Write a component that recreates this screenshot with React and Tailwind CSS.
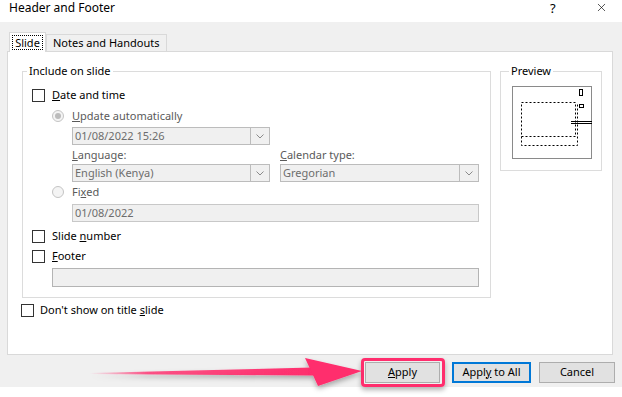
import { X } from 'lucide-react'

function Chevron() {
  return (
    <svg width="8" height="5" viewBox="0 0 8 5" className="text-[#8a8a8a]">
      <path d="M0.5 0.5 L4 4 L7.5 0.5" fill="none" stroke="currentColor" strokeWidth="1" />
    </svg>
  )
}

function Combo({ value, className }) {
  return (
    <div className={`flex h-[18px] border border-[#bcbcbc] bg-[#f0f0f0] ${className}`}>
      <span className="flex-1 pl-[2px] leading-[16px] text-[#6d6d6d]">{value}</span>
      <span className="w-[19px] flex items-center justify-center border-l border-[#bcbcbc]">
        <Chevron />
      </span>
    </div>
  )
}

function Checkbox() {
  return <span className="w-[13px] h-[13px] border border-[#333] bg-white shrink-0" />
}

function Radio({ checked }) {
  return (
    <span className="w-[12px] h-[12px] rounded-full border border-[#c4c4c4] bg-[#f4f4f4] shrink-0 flex items-center justify-center">
      {checked && <span className="w-[6px] h-[6px] rounded-full bg-[#bcbcbc]" />}
    </span>
  )
}

function PreviewBox() {
  return (
    <svg width="80" height="73" viewBox="0 0 80 73" className="block">
      <rect x="0.5" y="0.5" width="79" height="72" fill="white" stroke="#8a8a8a" />
      <rect x="67.5" y="3.5" width="3" height="6" fill="none" stroke="#000" />
      <rect x="67.5" y="18.5" width="4" height="3" fill="none" stroke="#000" />
      <path d="M9.5 16.5 H63.5 V50.5 H9.5 Z" fill="none" stroke="#000" strokeDasharray="2 2" />
      <path d="M9.5 50.5 V59.5 H65.5 V16.5" fill="none" stroke="#000" strokeDasharray="2 2" />
      <path d="M59 35.5 H80 M59 37.5 H80" stroke="#000" />
    </svg>
  )
}

export default function App() {
  return (
    <div className="relative w-[622px] h-[397px] bg-white overflow-hidden text-[11px] text-black" style={{ fontFamily: '"Noto Sans", sans-serif' }}>
      {/* Title bar */}
      <div className="h-[22px] flex items-center pl-[9px] relative">
        <span className="text-[12px] leading-none -mt-[6px]">Header and Footer</span>
        <span className="absolute left-[550px] top-[-1px] text-[13px]">?</span>
        <X className="absolute left-[595px] top-[1px]" size={13} strokeWidth={1.2} />
      </div>

      {/* Body */}
      <div className="bg-[#f0f0f0] h-[365px] pt-[10px]">
        {/* Tabs */}
        <div className="flex items-end pl-[9px] h-[19px]">
          <div className="relative z-10 -mb-px h-[20px] w-[37px] bg-white border border-b-0 border-[#d9d9d9] flex items-center justify-center">
            <span className="border border-dotted border-black px-[2px] leading-[13px]">Slide</span>
          </div>
          <div className="h-[17px] bg-[#f0f0f0] border border-b-0 border-[#d9d9d9] px-[6px] leading-[15px]">Notes and Handouts</div>
        </div>

        {/* Panel */}
        <div className="ml-[7px] w-[606px] h-[304px] bg-white border border-[#d9d9d9] pl-[14px] pr-[10px] pt-[11px]">
          <div className="flex gap-[9px]">
            <div className="w-[469px]">
              <fieldset className="border border-[#dcdcdc] pl-[9px] pb-[10px]">
                <legend className="-ml-[5px] px-[2px] leading-[16px]">Include on slide</legend>
                <div className="flex items-center gap-[7px] h-[16px] mt-[8px]">
                  <Checkbox />
                  <span><u>D</u>ate and time</span>
                </div>
                <div className="pl-[20px]">
                  <div className="flex items-center gap-[8px] h-[16px] mt-[5px] text-[#5a5a5a]">
                    <Radio checked />
                    <span><u>U</u>pdate automatically</span>
                  </div>
                  <div className="pl-[20px]">
                    <Combo value="01/08/2022 15:26" className="w-[198px] mt-[3px]" />
                    <div className="flex gap-[10px] mt-[2px] text-[#5a5a5a]">
                      <div className="w-[198px]">
                        <div className="h-[15px] leading-[15px]"><u>L</u>anguage:</div>
                        <Combo value="English (Kenya)" className="w-[198px] mt-[2px]" />
                      </div>
                      <div className="w-[199px]">
                        <div className="h-[15px] leading-[15px]"><u>C</u>alendar type:</div>
                        <Combo value="Gregorian" className="w-[199px] mt-[2px]" />
                      </div>
                    </div>
                  </div>
                  <div className="flex items-center gap-[8px] h-[16px] mt-[2px] text-[#5a5a5a]">
                    <Radio />
                    <span>Fi<u>x</u>ed</span>
                  </div>
                  <div className="ml-[20px] w-[407px] h-[18px] mt-[4px] border border-[#c8c8c8] bg-[#f0f0f0] pl-[2px] leading-[16px] text-[#6d6d6d]">01/08/2022</div>
                </div>
                <div className="flex items-center gap-[7px] h-[16px] mt-[6px]">
                  <Checkbox />
                  <span>Slide <u>n</u>umber</span>
                </div>
                <div className="flex items-center gap-[7px] h-[16px] mt-[4px]">
                  <Checkbox />
                  <span><u>F</u>ooter</span>
                </div>
                <div className="ml-[20px] w-[427px] h-[19px] mt-[4px] border border-[#b4b4b4] bg-[#f0f0f0]" />
              </fieldset>
              <div className="flex items-center gap-[6px] h-[16px] mt-[4px] -ml-[1px]">
                <Checkbox />
                <span>Don't show on title <u>s</u>lide</span>
              </div>
            </div>

            <fieldset className="w-[102px] h-[108px] border border-[#dcdcdc] pl-[11px]">
              <legend className="-ml-[3px] px-[2px] leading-[16px]">Preview</legend>
              <div className="mt-[7px]">
                <PreviewBox />
              </div>
            </fieldset>
          </div>
        </div>

        {/* Buttons */}
        <div className="flex items-center mt-[6px] h-[22px] pl-[365px]">
          <div className="relative">
            <div className="w-[75px] h-[21px] bg-[#e1e1e1] border border-[#adadad] flex items-center justify-center"><span><u>A</u>pply</span></div>
            <div className="absolute -left-[4px] -top-[4px] w-[84px] h-[29px] border-[3px] border-[#ff2d6d] rounded-[4px] shadow-[0_3px_5px_rgba(0,0,0,0.3)]" />
          </div>
          <div className="ml-[12px] w-[79px] h-[21px] bg-[#e1e1e1] border border-[#0078d7] shadow-[inset_0_0_0_1px_#0078d7] flex items-center justify-center"><span>Appl<u>y</u> to All</span></div>
          <div className="ml-[8px] w-[76px] h-[21px] bg-[#e1e1e1] border border-[#adadad] flex items-center justify-center">Cancel</div>
        </div>
      </div>

      {/* Arrow annotation */}
      <svg className="absolute left-0 top-0 pointer-events-none" width="622" height="397" viewBox="0 0 622 397">
        <defs>
          <linearGradient id="shaft" x1="90" y1="0" x2="320" y2="0" gradientUnits="userSpaceOnUse">
            <stop offset="0" stopColor="#ff2d6d" stopOpacity="0" />
            <stop offset="0.25" stopColor="#ff2d6d" stopOpacity="0.8" />
            <stop offset="1" stopColor="#ff2d6d" />
          </linearGradient>
          <filter id="sh" x="-10%" y="-50%" width="120%" height="200%">
            <feDropShadow dx="0" dy="3" stdDeviation="2.5" floodColor="#000" floodOpacity="0.3" />
          </filter>
        </defs>
        <g filter="url(#sh)">
          <polygon points="90,373 312,367.5 314,375.5 90,374" fill="url(#shaft)" />
          <polygon points="305,358 362,371 318,386" fill="#ff2d6d" />
        </g>
      </svg>
    </div>
  )
}
